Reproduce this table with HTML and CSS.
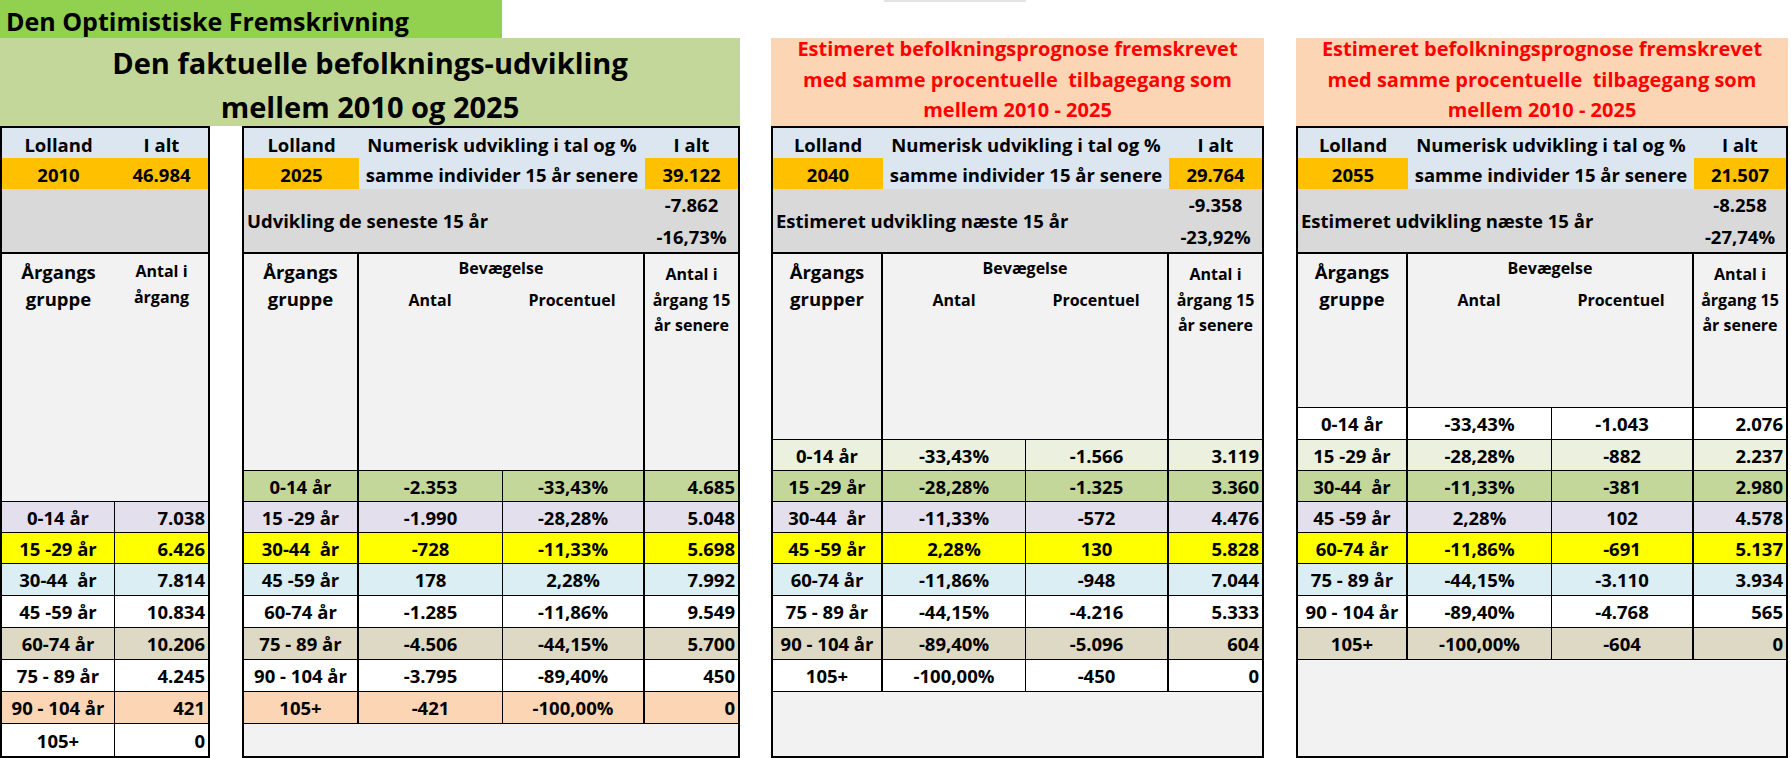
FILE: index.html
```html
<!DOCTYPE html>
<html lang="da">
<head>
<meta charset="utf-8">
<title>Den Optimistiske Fremskrivning</title>
<link rel="stylesheet" href="styles.css">
</head>
<body>
<div class="sheet">
  <section class="group group-a">
    <div class="title-bar">Den Optimistiske Fremskrivning</div>
    <div class="banner banner-green">Den faktuelle befolknings-udvikling<br>mellem 2010 og 2025</div>
    <div class="pair">
      <div class="tbl t1">
        <div class="cell hA">Lolland</div>
        <div class="cell hA">I alt</div>
        <div class="cell orange">2010</div>
        <div class="cell orange">46.984</div>
        <div class="cell hC span2"></div>
        <div class="cell hD">Årgangs<br>gruppe</div>
        <div class="cell hD small t1small">Antal i<br>årgang</div>

        <div class="d k1 lav">0-14 år</div><div class="d num lav">7.038</div>
        <div class="d k1 yel">15 -29 år</div><div class="d num yel">6.426</div>
        <div class="d k1 lblue">30-44&nbsp; år</div><div class="d num lblue">7.814</div>
        <div class="d k1 white">45 -59 år</div><div class="d num white">10.834</div>
        <div class="d k1 tan">60-74 år</div><div class="d num tan">10.206</div>
        <div class="d k1 white">75 - 89 år</div><div class="d num white">4.245</div>
        <div class="d k1 peach">90 - 104 år</div><div class="d num peach">421</div>
        <div class="d k1 white last">105+</div><div class="d num white last">0</div>
      </div>

      <div class="tbl t2">
        <div class="cell hA">Lolland</div>
        <div class="cell hA span2">Numerisk udvikling i tal og %</div>
        <div class="cell hA">I alt</div>
        <div class="cell orange">2025</div>
        <div class="cell hB span2">samme individer 15 år senere</div>
        <div class="cell orange">39.122</div>
        <div class="cell hC span3 label">Udvikling de seneste 15 år</div>
        <div class="cell hC vals"><span>-7.862</span><span>-16,73%</span></div>
        <div class="cell hD k1">Årgangs<br>gruppe</div>
        <div class="cell hD span2 k3 bev">
          <div class="bev-title">Bevægelse</div>
          <div class="bev-sub"><span>Antal</span><span>Procentuel</span></div>
        </div>
        <div class="cell hD small">Antal i<br>årgang 15<br>år senere</div>

        <div class="d k1 green">0-14 år</div><div class="d k2 green">-2.353</div><div class="d k3 green">-33,43%</div><div class="d num green">4.685</div>
        <div class="d k1 lav">15 -29 år</div><div class="d k2 lav">-1.990</div><div class="d k3 lav">-28,28%</div><div class="d num lav">5.048</div>
        <div class="d k1 yel">30-44&nbsp; år</div><div class="d k2 yel">-728</div><div class="d k3 yel">-11,33%</div><div class="d num yel">5.698</div>
        <div class="d k1 lblue">45 -59 år</div><div class="d k2 lblue">178</div><div class="d k3 lblue">2,28%</div><div class="d num lblue">7.992</div>
        <div class="d k1 white">60-74 år</div><div class="d k2 white">-1.285</div><div class="d k3 white">-11,86%</div><div class="d num white">9.549</div>
        <div class="d k1 tan">75 - 89 år</div><div class="d k2 tan">-4.506</div><div class="d k3 tan">-44,15%</div><div class="d num tan">5.700</div>
        <div class="d k1 white">90 - 104 år</div><div class="d k2 white">-3.795</div><div class="d k3 white">-89,40%</div><div class="d num white">450</div>
        <div class="d k1 peach">105+</div><div class="d k2 peach">-421</div><div class="d k3 peach">-100,00%</div><div class="d num peach">0</div>
        <div class="fill"></div>
      </div>
    </div>
  </section>

  <section class="group group-b">
    <div class="top-gap"><div class="scroll-mark"></div></div>
    <div class="banner banner-peach"><p class="banner-text">Estimeret befolkningsprognose fremskrevet<br>med samme procentuelle&nbsp; tilbagegang som<br>mellem 2010 - 2025</p></div>
    <div class="tbl t3">
      <div class="cell hA">Lolland</div>
      <div class="cell hA span2">Numerisk udvikling i tal og %</div>
      <div class="cell hA">I alt</div>
      <div class="cell orange">2040</div>
      <div class="cell hB span2">samme individer 15 år senere</div>
      <div class="cell orange">29.764</div>
      <div class="cell hC span3 label">Estimeret udvikling næste 15 år</div>
      <div class="cell hC vals"><span>-9.358</span><span>-23,92%</span></div>
      <div class="cell hD k1">Årgangs<br>grupper</div>
      <div class="cell hD span2 k3 bev">
        <div class="bev-title">Bevægelse</div>
        <div class="bev-sub"><span>Antal</span><span>Procentuel</span></div>
      </div>
      <div class="cell hD small">Antal i<br>årgang 15<br>år senere</div>

      <div class="d k1 lgreen">0-14 år</div><div class="d k2 lgreen">-33,43%</div><div class="d k3 lgreen">-1.566</div><div class="d num lgreen">3.119</div>
      <div class="d k1 green">15 -29 år</div><div class="d k2 green">-28,28%</div><div class="d k3 green">-1.325</div><div class="d num green">3.360</div>
      <div class="d k1 lav">30-44&nbsp; år</div><div class="d k2 lav">-11,33%</div><div class="d k3 lav">-572</div><div class="d num lav">4.476</div>
      <div class="d k1 yel">45 -59 år</div><div class="d k2 yel">2,28%</div><div class="d k3 yel">130</div><div class="d num yel">5.828</div>
      <div class="d k1 lblue">60-74 år</div><div class="d k2 lblue">-11,86%</div><div class="d k3 lblue">-948</div><div class="d num lblue">7.044</div>
      <div class="d k1 white">75 - 89 år</div><div class="d k2 white">-44,15%</div><div class="d k3 white">-4.216</div><div class="d num white">5.333</div>
      <div class="d k1 tan">90 - 104 år</div><div class="d k2 tan">-89,40%</div><div class="d k3 tan">-5.096</div><div class="d num tan">604</div>
      <div class="d k1 white">105+</div><div class="d k2 white">-100,00%</div><div class="d k3 white">-450</div><div class="d num white">0</div>
      <div class="fill"></div>
    </div>
  </section>

  <section class="group group-c">
    <div class="top-gap"></div>
    <div class="banner banner-peach"><p class="banner-text">Estimeret befolkningsprognose fremskrevet<br>med samme procentuelle&nbsp; tilbagegang som<br>mellem 2010 - 2025</p></div>
    <div class="tbl t4">
      <div class="cell hA">Lolland</div>
      <div class="cell hA span2">Numerisk udvikling i tal og %</div>
      <div class="cell hA">I alt</div>
      <div class="cell orange">2055</div>
      <div class="cell hB span2">samme individer 15 år senere</div>
      <div class="cell orange">21.507</div>
      <div class="cell hC span3 label">Estimeret udvikling næste 15 år</div>
      <div class="cell hC vals"><span>-8.258</span><span>-27,74%</span></div>
      <div class="cell hD k1">Årgangs<br>gruppe</div>
      <div class="cell hD span2 k3 bev">
        <div class="bev-title">Bevægelse</div>
        <div class="bev-sub"><span>Antal</span><span>Procentuel</span></div>
      </div>
      <div class="cell hD small">Antal i<br>årgang 15<br>år senere</div>

      <div class="d k1 white">0-14 år</div><div class="d k2 white">-33,43%</div><div class="d k3 white">-1.043</div><div class="d num white">2.076</div>
      <div class="d k1 lgreen">15 -29 år</div><div class="d k2 lgreen">-28,28%</div><div class="d k3 lgreen">-882</div><div class="d num lgreen">2.237</div>
      <div class="d k1 green">30-44&nbsp; år</div><div class="d k2 green">-11,33%</div><div class="d k3 green">-381</div><div class="d num green">2.980</div>
      <div class="d k1 lav">45 -59 år</div><div class="d k2 lav">2,28%</div><div class="d k3 lav">102</div><div class="d num lav">4.578</div>
      <div class="d k1 yel">60-74 år</div><div class="d k2 yel">-11,86%</div><div class="d k3 yel">-691</div><div class="d num yel">5.137</div>
      <div class="d k1 lblue">75 - 89 år</div><div class="d k2 lblue">-44,15%</div><div class="d k3 lblue">-3.110</div><div class="d num lblue">3.934</div>
      <div class="d k1 white">90 - 104 år</div><div class="d k2 white">-89,40%</div><div class="d k3 white">-4.768</div><div class="d num white">565</div>
      <div class="d k1 tan">105+</div><div class="d k2 tan">-100,00%</div><div class="d k3 tan">-604</div><div class="d num tan">0</div>
      <div class="fill"></div>
    </div>
  </section>
</div>
</body>
</html>
```

FILE: styles.css
```css
* { box-sizing: border-box; }
html, body { margin: 0; padding: 0; background: #fff; }
body {
  width: 1791px;
  height: 758px;
  overflow: hidden;
  font-family: "Open Sans", "Liberation Sans", sans-serif;
  font-weight: 700;
  color: #000;
}
.sheet { display: flex; align-items: flex-start; }
.group-a { width: 740px; }
.group-b { width: 493px; margin-left: 31px; }
.group-c { width: 492px; margin-left: 32px; }

.title-bar {
  width: 502px;
  height: 38px;
  background: #92d050;
  font-size: 25px;
  line-height: 42px;
  padding-left: 6px;
  white-space: nowrap;
  overflow: hidden;
}
.top-gap { height: 38px; }
.scroll-mark { margin-left: 113px; width: 142px; height: 2px; background: #e4e4e4; }

.banner { height: 88px; text-align: center; white-space: nowrap; }
.banner-green {
  background: #c4d79b;
  font-size: 29px;
  line-height: 44px;
  padding-top: 3px;
}
.banner-peach { background: #fcd5b4; color: #ff0000; font-size: 20px; line-height: 30.5px; }
.banner-text { margin: 0; position: relative; top: -4px; }

.pair { display: flex; gap: 32px; }

.tbl {
  border: 2px solid #000;
  height: 632px;
  display: grid;
  background: #fff;
}
.t1 {
  width: 210px;
  grid-template-columns: 113px 93px;
  grid-template-rows: 30px 31px 65px 248px 31px 31px repeat(6, 32px);
}
.t2 {
  width: 498px;
  grid-template-columns: 115px 144px 142px 93px;
  grid-template-rows: 30px 31px 65px 217px 31px 31px 31px repeat(5, 32px) 1fr;
}
.t3 {
  width: 493px;
  grid-template-columns: 110px 143px 143px 93px;
  grid-template-rows: 30px 31px 65px 186px 31px 31px 31px 31px repeat(4, 32px) 1fr;
}
.t4 {
  width: 492px;
  grid-template-columns: 110px 144px 142px 92px;
  grid-template-rows: 30px 31px 65px 154px 32px 31px 31px 31px 31px repeat(3, 32px) 1fr;
}

.cell {
  display: flex;
  align-items: center;
  justify-content: center;
  font-size: 18.5px;
  white-space: nowrap;
  text-align: center;
}
.span2 { grid-column: span 2; }
.span3 { grid-column: span 3; }

.hA { background: #dce6f1; padding-top: 2px; }
.hB { background: #dce6f1; padding-top: 1px; }
.orange { background: #ffc000; padding-top: 1px; }
.hC { background: #d9d9d9; border-bottom: 2px solid #000; }
.hC.label { justify-content: flex-start; padding-left: 3px; }
.hC.vals { flex-direction: column; line-height: 31.5px; }

.hD {
  background: #f2f2f2;
  align-items: flex-start;
  border-bottom: 1px solid #000;
  line-height: 27px;
  padding-top: 4px;
}
.hD.small { font-size: 16px; line-height: 25.5px; padding-top: 8px; }
.t1 .hD.t1small { line-height: 26px; padding-top: 4px; }
.hD.k1 { border-right: 2px solid #000; }
.hD.k3 { border-right: 2px solid #000; }
.hD.bev {
  flex-direction: column;
  justify-content: flex-start;
  align-items: stretch;
  font-size: 16px;
  line-height: 25px;
  padding-top: 2px;
}
.bev-title { text-align: center; }
.bev-sub { display: flex; margin-top: 7px; }
.bev-sub span { flex: 1; text-align: center; }

.d {
  display: flex;
  align-items: center;
  justify-content: center;
  font-size: 18.5px;
  white-space: nowrap;
  border-bottom: 1px solid #000;
}
.d.k1 { border-right: 2px solid #000; }
.t1 .d.k1 { border-right-width: 1px; }
.d.k2 { border-right: 1px solid #000; }
.d.k3 { border-right: 2px solid #000; }
.d.num { justify-content: flex-end; padding-right: 3px; }
.d.last { border-bottom: none; }

.fill { grid-column: 1 / -1; background: #f2f2f2; }

.white { background: #fff; }
.lav { background: #e4dfec; }
.yel { background: #ffff00; }
.lblue { background: #daeef3; }
.tan { background: #ddd9c4; }
.peach { background: #fcd5b4; }
.lgreen { background: #ebf1de; }
.green { background: #c4d79b; }
```
